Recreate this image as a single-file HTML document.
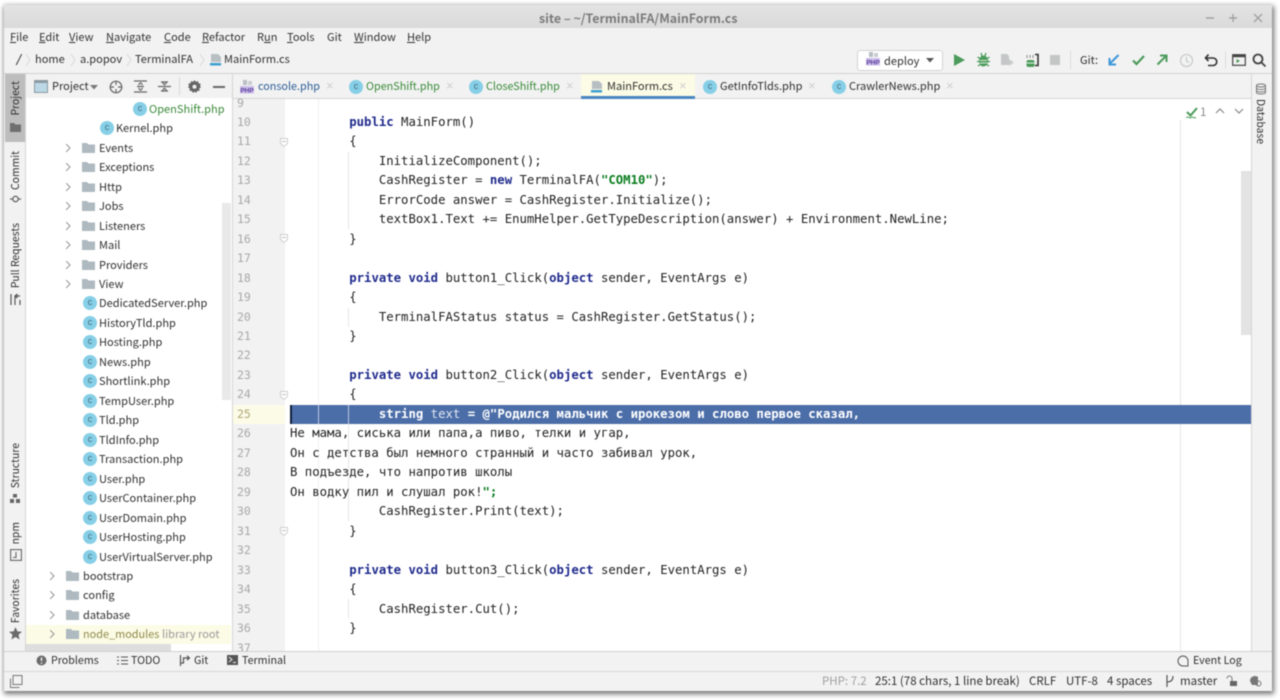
<!DOCTYPE html>
<html><head><meta charset="utf-8"><title>site – ~/TerminalFA/MainForm.cs</title>
<style>
html,body{margin:0;padding:0;width:1280px;height:700px;overflow:hidden;background:#fff}
#w{position:absolute;left:0;top:0;width:1280px;height:700px;filter:blur(.45px);overflow:hidden}
#w div,#w span.a,#w svg.a{position:absolute}
.u{font-family:"Noto Sans CJK SC","Liberation Sans",sans-serif;font-size:11.05px;line-height:18px;color:#303030;white-space:pre;margin-top:-.5px}
.z{margin-top:0}
.st{font-size:11.5px;margin-top:0}
.b{font-size:10.7px;margin-top:0}
.c{font-family:"DejaVu Sans Mono","Liberation Mono",monospace;font-size:12.31px;line-height:19px;color:#222;white-space:pre;left:290px}
.n{font-family:"DejaVu Sans Mono",monospace;font-size:11.5px;line-height:19px;color:#a8a8a8;left:237px}
b.k{color:#1f2a8c;font-weight:700}
b.s{color:#0a7d1e;font-weight:700}
.v{writing-mode:vertical-rl;transform:rotate(180deg);font-family:"Noto Sans CJK SC","Liberation Sans",sans-serif;font-size:10.4px;color:#303030;line-height:14px;left:8px;white-space:pre}
.ci{width:14px;height:14px;border-radius:50%;background:#86cfe7;color:#456f7e;font:400 9px/13px "Liberation Sans",sans-serif;text-align:center}
.g{color:#3a8a3a}
.x{color:#cfcfcf;font:13px/18px "Liberation Sans",sans-serif}
u{text-decoration:underline;text-underline-offset:1px;text-decoration-thickness:1px}
</style></head><body>
<svg width="0" height="0" style="position:absolute"><defs>
<g id="f"><path d="M0 1h5l1.500 1.500H13V11H0z" fill="#aeb9c0"/></g>
<g id="cs"><path d="M2 1h7l3 3v5H2z" fill="#b8bfc3"/><path d="M1 10h11v2.500H1z" fill="#3f9fd0"/></g>
<path id="ch" d="M0 0l4 4-4 4" fill="none" stroke="#9a9a9a" stroke-width="1.100"/>
<g id="fold"><path d="M.5.5h7v5l-3.500 3-3.500-3z" fill="#fff" stroke="#cfcfcf"/><path d="M2 3.500h4" stroke="#bdbdbd"/></g>
</defs></svg>
<div id="w">
<div style="left:0;top:0;width:1280px;height:700px;background:#fff"></div>
<div style="left:4px;top:5px;width:1268px;height:686px;background:#f2f2f2;box-shadow:1px 2px 5px 1px rgba(0,0,0,.55)"></div>

<!-- title bar -->
<div style="left:4px;top:5px;width:1268px;height:23px;background:linear-gradient(#e3e3e3,#dadada)"></div>
<div class="u z" style="left:539px;top:9px;font-weight:700;font-size:12.4px;color:#7b7b7b">site – ~/TerminalFA/MainForm.cs</div>
<svg class="a" style="left:1200px;top:11px" width="70" height="14" fill="none" stroke="#a2a2a2" stroke-width="1.400"><path d="M6 7h8M29 7h8M33 3v8M54 3l8 8M62 3l-8 8"/></svg>

<!-- menu -->
<div class="u" style="left:10px;top:28.500px;color:#333"><u>F</u>ile</div>
<div class="u" style="left:39px;top:28.500px;color:#333"><u>E</u>dit</div>
<div class="u" style="left:69px;top:28.500px;color:#333"><u>V</u>iew</div>
<div class="u" style="left:106px;top:28.500px;color:#333"><u>N</u>avigate</div>
<div class="u" style="left:164px;top:28.500px;color:#333"><u>C</u>ode</div>
<div class="u" style="left:202px;top:28.500px;color:#333"><u>R</u>efactor</div>
<div class="u" style="left:257px;top:28.500px;color:#333">R<u>u</u>n</div>
<div class="u" style="left:287px;top:28.500px;color:#333"><u>T</u>ools</div>
<div class="u" style="left:327px;top:28.500px;color:#333">Git</div>
<div class="u" style="left:354px;top:28.500px;color:#333"><u>W</u>indow</div>
<div class="u" style="left:407px;top:28.500px;color:#333"><u>H</u>elp</div>

<!-- breadcrumb -->
<div class="u z" style="left:16px;top:50px;font-weight:700;font-style:italic;color:#333">/</div>
<div class="u z" style="left:35px;top:50px">home</div>
<div class="u z" style="left:80px;top:50px">a.popov</div>
<div class="u z" style="left:135px;top:50px">TerminalFA</div>
<div class="u z" style="left:224px;top:50px">MainForm.cs</div>
<svg class="a" style="left:25px;top:53px" width="180" height="14" fill="none" stroke="#d8d8d8"><path d="M1 1l4 6-4 6M46 1l4 6-4 6M102 1l4 6-4 6M175 1l4 6-4 6"/></svg>
<svg class="a" style="left:209px;top:53px" width="14" height="14"><use href="#cs"/></svg>

<!-- run toolbar -->
<div style="left:857px;top:50px;width:84px;height:19px;background:#fff;border:1px solid #d2d2d2;border-radius:3px"></div>
<svg class="a" style="left:866px;top:52px" width="15" height="15"><rect x="3" y="0" width="4" height="5" fill="#b9bec2"/><rect x="8" y="1" width="4" height="4" fill="#c9cdd0"/><rect x="0" y="6" width="14" height="7.500" fill="#cdbfe9"/><text x="7" y="12.300" text-anchor="middle" font-family="Liberation Sans" font-size="6.500" font-weight="700" fill="#5b3fa0">PHP</text></svg>
<div class="u z" style="left:884px;top:51.500px">deploy</div>
<svg class="a" style="left:926px;top:58px" width="8" height="5"><path d="M0 0h8L4 4.500z" fill="#555"/></svg>
<svg class="a" style="left:953px;top:53px" width="13" height="14"><path d="M1 1l11 6-11 6z" fill="#4c9b5b"/></svg>
<svg class="a" style="left:976px;top:52px" width="15" height="16"><ellipse cx="7.500" cy="9" rx="4.500" ry="5.500" fill="#4c9b5b"/><path d="M1.500 5l3 2M13.500 5l-3 2M1 9.500h3M14 9.500h-3M2 14l3-2M13 14l-3-2M5 1l1 3M10 1L9 4" stroke="#4c9b5b" stroke-width="1.300"/><path d="M4 8.500h7M4 11h7" stroke="#d5ead9"/></svg>
<svg class="a" style="left:1000px;top:52px" width="15" height="16"><path d="M1 2h6l2 2v9H1z" fill="#c4c7c8"/><path d="M9 7l5 3.500L9 14z" fill="#c9cccd"/></svg>
<svg class="a" style="left:1024px;top:52px" width="16" height="16"><path d="M3 3v3M6 3v3M9 3v3" stroke="#8a8a8a"/><rect x="2.500" y="8" width="8" height="7" rx="2" fill="#4c9b5b"/><path d="M2 11h9" stroke="#e0efe3"/><path d="M11 2.500h3v11h-3" fill="none" stroke="#333" stroke-width="1.600"/></svg>
<div style="left:1050px;top:55px;width:10px;height:10px;background:#c4c6c6"></div>
<div style="left:1070px;top:51px;width:1px;height:18px;background:#dcdcdc"></div>
<div class="u z" style="left:1080px;top:50.500px">Git:</div>
<svg class="a" style="left:1107px;top:53px" width="14" height="14" fill="none" stroke="#3e97d8" stroke-width="2"><path d="M11.500 2L2.500 11M2.500 5v6.500H9"/></svg>
<svg class="a" style="left:1131px;top:53px" width="15" height="14" fill="none" stroke="#4c9b5b" stroke-width="2.200"><path d="M2 7.500l3.500 3.500L13 3"/></svg>
<svg class="a" style="left:1155px;top:53px" width="14" height="14" fill="none" stroke="#4c9b5b" stroke-width="2"><path d="M2.500 11.500L11.500 2.500M5 2.500h6.500V9"/></svg>
<svg class="a" style="left:1179px;top:53px" width="15" height="15" fill="none" stroke="#c9cccd" stroke-width="1.300"><circle cx="7.500" cy="7.500" r="6"/><path d="M7.500 4v4l2.500 1.500"/></svg>
<svg class="a" style="left:1204px;top:53px" width="15" height="14" fill="none" stroke="#333" stroke-width="1.600"><path d="M1.500 5H9a3.500 3.500 0 0 1 0 7.500H4M4.500 1.500L1.500 5l3 3"/></svg>
<div style="left:1225px;top:51px;width:1px;height:18px;background:#dcdcdc"></div>
<svg class="a" style="left:1232px;top:53px" width="14" height="14"><rect x=".7" y="1.700" width="12.600" height="10.600" fill="none" stroke="#444" stroke-width="1.200"/><path d="M1 2h12v2.200H1z" fill="#444"/><path d="M4.500 6l3.500 2-3.500 2z" fill="#4c9b5b"/></svg>
<svg class="a" style="left:1252px;top:53px" width="15" height="15" fill="none" stroke="#444" stroke-width="1.800"><circle cx="6" cy="6" r="4.500"/><path d="M9.500 9.500l4 4"/></svg>

<div style="left:4px;top:73px;width:1268px;height:1px;background:#d2d2d2"></div>

<!-- left strip -->
<div style="left:5px;top:74px;width:20px;height:68px;background:#bdbdbd"></div>
<div style="left:25px;top:74px;width:1px;height:577px;background:#d4d4d4"></div>
<div class="v" style="top:81px;left:8px">Project</div>
<svg class="a" style="left:9px;top:122px" width="13" height="11"><path d="M1 1h4l1.500 1.500H12V10H1z" fill="#6f6f6f"/></svg>
<div class="v" style="top:151px">Commit</div>
<svg class="a" style="left:9px;top:193px" width="13" height="12" fill="none" stroke="#666" stroke-width="1.300"><circle cx="6.500" cy="6" r="2.700"/><path d="M1 6h3M9 6h3"/></svg>
<div class="v" style="top:223px">Pull Requests</div>
<svg class="a" style="left:9px;top:293px" width="13" height="13" fill="none" stroke="#555" stroke-width="1.200"><path d="M2 1v11M6 12V3h5M6 3l2.500-2M6 3l2.500 2M11 7v5"/></svg>
<div class="v" style="top:443px">Structure</div>
<svg class="a" style="left:10px;top:494px" width="11" height="10" fill="#666"><rect x="3" y="0" width="4" height="3.500"/><rect x="0" y="5" width="4" height="4"/><rect x="6" y="5" width="4" height="4"/></svg>
<div class="v" style="top:522px">npm</div>
<svg class="a" style="left:10px;top:549px" width="12" height="12" fill="none" stroke="#666" stroke-width="1.100"><rect x=".6" y=".6" width="10.800" height="10.800"/><path d="M6 3v5.500H3"/></svg>
<div class="v" style="top:579px">Favorites</div>
<svg class="a" style="left:9px;top:627px" width="13" height="13"><path d="M6.500 0l1.900 4.400 4.600.4-3.500 3 1.100 4.700-4.100-2.500-4.100 2.500 1.100-4.700L0 4.800l4.600-.4z" fill="#6b6b6b"/></svg>

<!-- project header -->
<div style="left:26px;top:74px;width:206px;height:24px;background:#f2f2f2"></div>
<svg class="a" style="left:34px;top:80px" width="14" height="13"><rect x=".5" y=".5" width="13" height="12" fill="#bcd8e6" stroke="#8d9aa2"/><rect x="1" y="1" width="12" height="2" fill="#8d9aa2"/></svg>
<div class="u" style="left:52px;top:77.500px">Project</div>
<svg class="a" style="left:90px;top:85px" width="8" height="5"><path d="M0 0h8L4 4.500z" fill="#777"/></svg>
<svg class="a" style="left:109px;top:80px" width="14" height="14" fill="none" stroke="#666" stroke-width="1.200"><circle cx="7" cy="7" r="5.800"/><path d="M7 1v4M7 9v4M1 7h4M9 7h4"/></svg>
<svg class="a" style="left:134px;top:80px" width="13" height="13" fill="none" stroke="#666" stroke-width="1.200"><path d="M0 1h13M0 12h13M3 6.500h7M6.500 2.500L4.500 5M6.500 2.500L8.500 5M6.500 10.500L4.500 8M6.500 10.500L8.500 8"/></svg>
<svg class="a" style="left:158px;top:80px" width="13" height="13" fill="none" stroke="#666" stroke-width="1.200"><path d="M0 6.500h13M3 2h7M3 11h7M6.500 5L4.500 2.500M6.500 5L8.500 2.500M6.500 8L4.500 10.500M6.500 8L8.500 10.500"/></svg>
<div style="left:179px;top:77px;width:1px;height:18px;background:#d8d8d8"></div>
<svg class="a" style="left:188px;top:80px" width="13" height="13" fill="#666"><path d="M6.500 0l1.300 1.800 2.200-.7.500 2.200 2.200.5-.7 2.200L13 7.300l-1.800 1.200.4 2.300-2.300.1-1.100 2-1.700-1.300-1.700 1.300-1.100-2-2.300-.1.400-2.300L0 7.300 1 6 .3 3.800l2.200-.5.500-2.200 2.200.7z"/><circle cx="6.500" cy="6.700" r="2" fill="#f2f2f2"/></svg>
<div style="left:213px;top:86px;width:12px;height:1.500px;background:#666"></div>

<!-- tree -->
<div style="left:26px;top:98px;width:206px;height:553px;background:#fff"></div>
<div style="left:26px;top:625px;width:205px;height:19px;background:#fbfbe6"></div>
<div style="left:222px;top:203px;width:9px;height:197px;background:#e9e9e9"></div>
<div style="left:26px;top:644px;width:145px;height:7px;background:#dedede"></div>
<div style="left:232px;top:74px;width:1px;height:577px;background:#d4d4d4"></div>

<div class="ci" style="left:133px;top:102px">c</div><div class="u g" style="left:149px;top:100px">OpenShift.php</div>
<div class="ci" style="left:100px;top:121px">c</div><div class="u" style="left:116px;top:119.500px">Kernel.php</div>

<svg class="a" style="left:66px;top:144px" width="6" height="10"><use href="#ch"/></svg><svg class="a" style="left:82px;top:142px" width="14" height="12"><use href="#f"/></svg><div class="u" style="left:99px;top:139px">Events</div>
<svg class="a" style="left:66px;top:163px" width="6" height="10"><use href="#ch"/></svg><svg class="a" style="left:82px;top:161px" width="14" height="12"><use href="#f"/></svg><div class="u" style="left:99px;top:158.500px">Exceptions</div>
<svg class="a" style="left:66px;top:183px" width="6" height="10"><use href="#ch"/></svg><svg class="a" style="left:82px;top:181px" width="14" height="12"><use href="#f"/></svg><div class="u" style="left:99px;top:178px">Http</div>
<svg class="a" style="left:66px;top:202px" width="6" height="10"><use href="#ch"/></svg><svg class="a" style="left:82px;top:200px" width="14" height="12"><use href="#f"/></svg><div class="u" style="left:99px;top:197.500px">Jobs</div>
<svg class="a" style="left:66px;top:222px" width="6" height="10"><use href="#ch"/></svg><svg class="a" style="left:82px;top:220px" width="14" height="12"><use href="#f"/></svg><div class="u" style="left:99px;top:217px">Listeners</div>
<svg class="a" style="left:66px;top:241px" width="6" height="10"><use href="#ch"/></svg><svg class="a" style="left:82px;top:239px" width="14" height="12"><use href="#f"/></svg><div class="u" style="left:99px;top:236.500px">Mail</div>
<svg class="a" style="left:66px;top:261px" width="6" height="10"><use href="#ch"/></svg><svg class="a" style="left:82px;top:259px" width="14" height="12"><use href="#f"/></svg><div class="u" style="left:99px;top:256px">Providers</div>
<svg class="a" style="left:66px;top:280px" width="6" height="10"><use href="#ch"/></svg><svg class="a" style="left:82px;top:278px" width="14" height="12"><use href="#f"/></svg><div class="u" style="left:99px;top:275.500px">View</div>

<div class="ci" style="left:83px;top:296px">c</div><div class="u" style="left:99px;top:294.500px">DedicatedServer.php</div>
<div class="ci" style="left:83px;top:316px">c</div><div class="u" style="left:99px;top:314px">HistoryTld.php</div>
<div class="ci" style="left:83px;top:335px">c</div><div class="u" style="left:99px;top:333.500px">Hosting.php</div>
<div class="ci" style="left:83px;top:355px">c</div><div class="u" style="left:99px;top:353px">News.php</div>
<div class="ci" style="left:83px;top:374px">c</div><div class="u" style="left:99px;top:372.500px">Shortlink.php</div>
<div class="ci" style="left:83px;top:394px">c</div><div class="u" style="left:99px;top:392px">TempUser.php</div>
<div class="ci" style="left:83px;top:413px">c</div><div class="u" style="left:99px;top:411.500px">Tld.php</div>
<div class="ci" style="left:83px;top:433px">c</div><div class="u" style="left:99px;top:431px">TldInfo.php</div>
<div class="ci" style="left:83px;top:452px">c</div><div class="u" style="left:99px;top:450.500px">Transaction.php</div>
<div class="ci" style="left:83px;top:472px">c</div><div class="u" style="left:99px;top:470px">User.php</div>
<div class="ci" style="left:83px;top:491px">c</div><div class="u" style="left:99px;top:489.500px">UserContainer.php</div>
<div class="ci" style="left:83px;top:511px">c</div><div class="u" style="left:99px;top:509px">UserDomain.php</div>
<div class="ci" style="left:83px;top:530px">c</div><div class="u" style="left:99px;top:528.500px">UserHosting.php</div>
<div class="ci" style="left:83px;top:550px">c</div><div class="u" style="left:99px;top:548px">UserVirtualServer.php</div>

<svg class="a" style="left:50px;top:572px" width="6" height="10"><use href="#ch"/></svg><svg class="a" style="left:66px;top:570px" width="14" height="12"><use href="#f"/></svg><div class="u" style="left:83px;top:567px">bootstrap</div>
<svg class="a" style="left:50px;top:591px" width="6" height="10"><use href="#ch"/></svg><svg class="a" style="left:66px;top:589px" width="14" height="12"><use href="#f"/></svg><div class="u" style="left:83px;top:586.500px">config</div>
<svg class="a" style="left:50px;top:611px" width="6" height="10"><use href="#ch"/></svg><svg class="a" style="left:66px;top:609px" width="14" height="12"><use href="#f"/></svg><div class="u" style="left:83px;top:606px">database</div>
<svg class="a" style="left:50px;top:630px" width="6" height="10"><use href="#ch"/></svg><svg class="a" style="left:66px;top:628px" width="14" height="12"><use href="#f"/></svg><div class="u" style="left:83px;top:625.500px;color:#8f8a4a;font-size:10.9px">node_modules</div><div class="u" style="left:162px;top:625.500px;color:#9a9a9a">library root</div>

<!-- tabs -->
<div style="left:233px;top:74px;width:1018px;height:24px;background:#f2f2f2"></div>
<div style="left:233px;top:98px;width:1018px;height:1px;background:#d4d4d4"></div>
<div style="left:581px;top:74px;width:114px;height:25px;background:#fbfbe6"></div>
<div style="left:581px;top:96px;width:114px;height:3px;background:#4a86c0"></div>

<svg class="a" style="left:240px;top:80px" width="15" height="15"><rect x="3" y="0" width="4" height="5" fill="#b9bec2"/><rect x="8" y="1" width="4" height="4" fill="#c9cdd0"/><rect x="0" y="6" width="14" height="7.500" fill="#cdbfe9"/><text x="7" y="12.300" text-anchor="middle" font-family="Liberation Sans" font-size="6.500" font-weight="700" fill="#5b3fa0">PHP</text></svg>
<div class="u" style="left:258px;top:77.500px;color:#2c5d96;font-size:10.8px">console.php</div><div class="x" style="left:326px;top:77px">×</div>
<div class="ci" style="left:349px;top:80px">c</div><div class="u g" style="left:366px;top:77.500px;font-size:10.8px">OpenShift.php</div><div class="x" style="left:446px;top:77px">×</div>
<div class="ci" style="left:469px;top:80px">c</div><div class="u g" style="left:486px;top:77.500px;font-size:10.8px">CloseShift.php</div><div class="x" style="left:566px;top:77px">×</div>
<svg class="a" style="left:590px;top:80px" width="14" height="14"><use href="#cs"/></svg>
<div class="u" style="left:607px;top:77.500px">MainForm.cs</div><div class="x" style="left:679px;top:77px">×</div>
<div class="ci" style="left:703px;top:80px">c</div><div class="u" style="left:720px;top:77.500px">GetInfoTlds.php</div><div class="x" style="left:808px;top:77px">×</div>
<div class="ci" style="left:832px;top:80px">c</div><div class="u" style="left:849px;top:77.500px">CrawlerNews.php</div><div class="x" style="left:946px;top:77px">×</div>

<!-- editor -->
<div style="left:233px;top:99px;width:1018px;height:552px;background:#fff"></div>
<div style="left:233px;top:99px;width:52px;height:552px;background:#f2f2f2"></div>
<div style="left:233px;top:405px;width:52px;height:19px;background:#fcfbe8"></div>
<div style="left:1180px;top:120px;width:1px;height:531px;background:#e6e6e6"></div>
<div style="left:1241px;top:171px;width:10px;height:164px;background:#e3e3e3"></div>
<div style="left:318px;top:99px;width:1px;height:552px;background:#efefef"></div>
<div style="left:348px;top:152px;width:1px;height:77px;background:#e6e6e6"></div>
<div style="left:348px;top:308px;width:1px;height:19px;background:#e6e6e6"></div>
<div style="left:348px;top:599px;width:1px;height:19px;background:#e6e6e6"></div>
<div style="left:348px;top:405px;width:1px;height:116px;background:#e6e6e6"></div>

<div style="left:290px;top:405px;width:961px;height:19px;background:#4c6ea8"></div>
<div style="left:290px;top:405px;width:2px;height:19px;background:#11203a"></div>
<div style="left:318px;top:405px;width:1px;height:19px;background:#b8c6dd"></div>
<div style="left:348px;top:405px;width:1px;height:19px;background:#b8c6dd"></div>

<div class="n" style="top:93.500px">9</div>
<div class="n" style="top:112.500px">10</div>
<div class="n" style="top:132px">11</div>
<div class="n" style="top:151.500px">12</div>
<div class="n" style="top:171px">13</div>
<div class="n" style="top:190.500px">14</div>
<div class="n" style="top:210px">15</div>
<div class="n" style="top:229.500px">16</div>
<div class="n" style="top:249px">17</div>
<div class="n" style="top:268.500px">18</div>
<div class="n" style="top:288px">19</div>
<div class="n" style="top:307.500px">20</div>
<div class="n" style="top:327px">21</div>
<div class="n" style="top:346px">22</div>
<div class="n" style="top:366px">23</div>
<div class="n" style="top:385px">24</div>
<div class="n" style="top:404.500px;color:#b0a878">25</div>
<div class="n" style="top:424px">26</div>
<div class="n" style="top:443.500px">27</div>
<div class="n" style="top:463px">28</div>
<div class="n" style="top:482.500px">29</div>
<div class="n" style="top:502px">30</div>
<div class="n" style="top:521.500px">31</div>
<div class="n" style="top:541px">32</div>
<div class="n" style="top:560.500px">33</div>
<div class="n" style="top:580px">34</div>
<div class="n" style="top:599.500px">35</div>
<div class="n" style="top:619px">36</div>
<div class="n" style="top:638.500px;height:12px;overflow:hidden">37</div>

<svg class="a" style="left:280px;top:138px" width="9" height="10"><use href="#fold"/></svg>
<svg class="a" style="left:280px;top:234px" width="9" height="10"><use href="#fold"/></svg>
<svg class="a" style="left:280px;top:391px" width="9" height="10"><use href="#fold"/></svg>
<svg class="a" style="left:280px;top:527px" width="9" height="10"><use href="#fold"/></svg>

<div class="c" style="top:112.500px">        <b class="k">public</b> MainForm()</div>
<div class="c" style="top:132px">        {</div>
<div class="c" style="top:151.500px">            InitializeComponent();</div>
<div class="c" style="top:171px">            CashRegister = <b class="k">new</b> TerminalFA(<b class="s">"COM10"</b>);</div>
<div class="c" style="top:190.500px">            ErrorCode answer = CashRegister.Initialize();</div>
<div class="c" style="top:210px">            textBox1.Text += EnumHelper.GetTypeDescription(answer) + Environment.NewLine;</div>
<div class="c" style="top:229.500px">        }</div>
<div class="c" style="top:268.500px">        <b class="k">private</b> <b class="k">void</b> button1_Click(<b class="k">object</b> sender, EventArgs e)</div>
<div class="c" style="top:288px">        {</div>
<div class="c" style="top:307.500px">            TerminalFAStatus status = CashRegister.GetStatus();</div>
<div class="c" style="top:327px">        }</div>
<div class="c" style="top:366px">        <b class="k">private</b> <b class="k">void</b> button2_Click(<b class="k">object</b> sender, EventArgs e)</div>
<div class="c" style="top:385px">        {</div>
<div class="c" style="top:404.500px;color:#fff;font-weight:700">            string <span style="font-weight:400;color:#dfe6f2">text</span> = @"Родился мальчик с ирокезом и слово первое сказал,</div>
<div class="c" style="top:424px">Не мама, сиська или папа,а пиво, телки и угар,</div>
<div class="c" style="top:443.500px">Он с детства был немного странный и часто забивал урок,</div>
<div class="c" style="top:463px">В подъезде, что напротив школы</div>
<div class="c" style="top:482.500px">Он водку пил и слушал рок!<b class="s">";</b></div>
<div class="c" style="top:502px">            CashRegister.Print(text);</div>
<div class="c" style="top:521.500px">        }</div>
<div class="c" style="top:560.500px">        <b class="k">private</b> <b class="k">void</b> button3_Click(<b class="k">object</b> sender, EventArgs e)</div>
<div class="c" style="top:580px">        {</div>
<div class="c" style="top:599.500px">            CashRegister.Cut();</div>
<div class="c" style="top:619px">        }</div>

<!-- inspection widget -->
<svg class="a" style="left:1186px;top:106px" width="13" height="13" fill="none"><path d="M1 6l3.500 3.500L11 2" stroke="#4c9b5b" stroke-width="2"/><path d="M0 11.500c2-1.500 3 1 5 0s3 1 5 0" stroke="#4c9b5b"/></svg>
<div class="u z" style="left:1200px;top:102.500px;color:#8a8a8a;font-size:11.500px">1</div>
<svg class="a" style="left:1215px;top:107px" width="30" height="8" fill="none" stroke="#888" stroke-width="1.200"><path d="M1 6l4-4 4 4M20 2l4 4 4-4"/></svg>

<!-- right strip -->
<div style="left:1251px;top:74px;width:21px;height:577px;background:#f2f2f2;border-left:1px solid #d4d4d4;box-sizing:border-box"></div>
<svg class="a" style="left:1255px;top:83px" width="12" height="12" fill="none" stroke="#777" stroke-width="1"><ellipse cx="6" cy="2.500" rx="4.500" ry="1.500"/><path d="M1.500 2.500v7c0 2 9 2 9 0v-7M1.500 5c0 2 9 2 9 0M1.500 7.500c0 2 9 2 9 0"/></svg>
<div class="v" style="left:1254px;top:99px;transform:none">Database</div>

<!-- tool bar -->
<div style="left:4px;top:650.500px;width:1268px;height:1px;background:#d0d0d0"></div>
<div style="left:4px;top:671px;width:1268px;height:1px;background:#d8d8d8"></div>
<svg class="a" style="left:36px;top:655px" width="11" height="11"><circle cx="5.500" cy="5.500" r="5" fill="#6b6b6b"/><path d="M5.500 2.500v3.500M5.500 7.500v1.300" stroke="#fff" stroke-width="1.300"/></svg>
<div class="u b" style="left:51px;top:652px">Problems</div>
<svg class="a" style="left:117px;top:656px" width="11" height="9" stroke="#555"><path d="M0 1h2M4 1h7M0 4.500h2M4 4.500h7M0 8h2M4 8h7"/></svg>
<div class="u b" style="left:131px;top:652px">TODO</div>
<svg class="a" style="left:179px;top:655px" width="12" height="11" fill="none" stroke="#555" stroke-width="1.200"><path d="M1.500 0v11M1.500 8h3V3h6M8 .8L10.500 3 8 5.200"/></svg>
<div class="u b" style="left:194px;top:652px">Git</div>
<svg class="a" style="left:227px;top:655px" width="11" height="11"><rect width="11" height="10" fill="#555"/><path d="M2 2l3 2.500L2 7M6 7.500h3" stroke="#eee" fill="none"/></svg>
<div class="u b" style="left:242px;top:652px">Terminal</div>
<svg class="a" style="left:1177px;top:655px" width="12" height="12" fill="none" stroke="#555" stroke-width="1"><path d="M11 11H6a5 5 0 1 1 5-5z"/></svg>
<div class="u b" style="left:1193px;top:652px">Event Log</div>

<!-- status bar -->
<svg class="a" style="left:10px;top:675px" width="13" height="13" fill="none" stroke="#777"><path d="M.5 3.500v9h9M3 .5h9v9H3z" fill="#f2f2f2"/></svg>
<div class="u st" style="left:822px;top:672px;color:#a0a0a0">PHP: 7.2</div>
<div class="u st" style="left:875px;top:672px">25:1 (78 chars, 1 line break)</div>
<div class="u st" style="left:1029px;top:672px">CRLF</div>
<div class="u st" style="left:1066px;top:672px">UTF-8</div>
<div class="u st" style="left:1107px;top:672px">4 spaces</div>
<svg class="a" style="left:1165px;top:674px" width="10" height="14" fill="none" stroke="#555" stroke-width="1.200"><path d="M2 1v12M2 8c3 0 6-1 6-6"/></svg>
<div class="u st" style="left:1180px;top:672px">master</div>
<svg class="a" style="left:1226px;top:675px" width="13" height="12"><path d="M1 3.500a2.500 2.500 0 0 1 5 0V6" fill="none" stroke="#777"/><rect x="4" y="6" width="7" height="5" fill="#666"/></svg>
<svg class="a" style="left:1248px;top:674px" width="15" height="14"><path d="M2 7a5 5 0 0 1 8-4v8H4z" fill="#777"/><circle cx="10.500" cy="9.500" r="2.500" fill="none" stroke="#777"/></svg>
</div>
</body></html>
